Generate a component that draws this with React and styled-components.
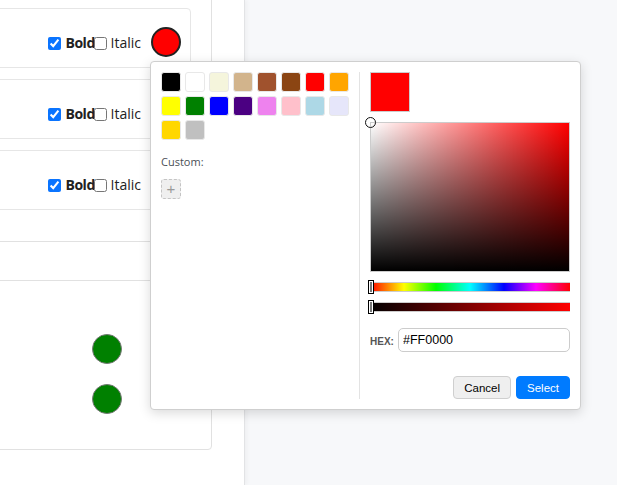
import React from "react";
import styled, { createGlobalStyle } from "styled-components";

const Global = createGlobalStyle`
  html, body { margin: 0; padding: 0; }
  body { font-family: "Open Sans", "Liberation Sans", sans-serif; background: #f7f8fa; }
  * { box-sizing: border-box; }
`;

const Page = styled.div`
  position: relative;
  display: flex;
  width: 617px;
  height: 485px;
  overflow: hidden;
  background: #f7f8fa;
`;

const LeftPanel = styled.div`
  width: 245px;
  flex: none;
  background: #fff;
  border-right: 1px solid #e2e3e5;
  box-shadow: 2px 0 4px rgba(0, 0, 0, 0.04);
  overflow: hidden;
`;

const Column = styled.div`
  display: flex;
  flex-direction: column;
  margin-left: -40px;
  padding-right: 32px;
`;

const Card = styled.div`
  background: #fff;
  border: 1px solid #e1e1e1;
  border-radius: 4px;
`;

const SettingsCard = styled(Card)`
  margin-top: -20px;
  padding: 27px 20px 31px 0;
  display: flex;
  flex-direction: column;
  gap: 11px;
`;

const SwatchCard = styled(Card)`
  margin-top: 38px;
  height: 170px;
  padding: 53px 89px 0 0;
  display: flex;
  flex-direction: column;
  align-items: flex-end;
  gap: 20px;
`;

const Row = styled.div`
  height: 60px;
  border: 1px solid #e6e6e6;
  border-radius: 4px;
  display: flex;
  align-items: center;
  justify-content: flex-end;
  padding: 8px 9px 0 0;
`;

const Toggle = styled.label`
  display: flex;
  align-items: center;
  font-size: 14px;
  line-height: 19px;
  color: #222;
  font-weight: ${(p) => (p.$bold ? 700 : 400)};
  white-space: nowrap;
`;

const Box = styled.input.attrs({ type: "checkbox", readOnly: true })`
  width: 13px;
  height: 13px;
  margin: 2px 0 0 0;
  accent-color: #0a74ff;
`;

const ToggleText = styled.span`
  display: inline-block;
  margin-left: ${(p) => p.$gap}px;
  width: ${(p) => (p.$w ? `${p.$w}px` : "auto")};
  letter-spacing: ${(p) => (p.$tight ? "-0.5px" : "0")};
  overflow: visible;
`;

const Dot = styled.div`
  width: 30px;
  height: 30px;
  border-radius: 50%;
  background: ${(p) => p.$color};
  border: ${(p) => p.$border};
  margin-left: ${(p) => p.$ml || 0}px;
  visibility: ${(p) => (p.$hidden ? "hidden" : "visible")};
  flex: none;
`;

const Popup = styled.div`
  position: absolute;
  left: 150px;
  top: 61px;
  width: 431px;
  height: 349px;
  background: #fff;
  border: 1px solid #cfcfcf;
  border-radius: 4px;
  box-shadow: 0 3px 12px rgba(0, 0, 0, 0.15);
  padding: 10px;
  display: flex;
`;

const Presets = styled.div`
  width: 199px;
  padding-right: 10px;
  border-right: 1px solid #e3e3e3;
  display: flex;
  flex-direction: column;
`;

const SwatchGrid = styled.div`
  display: grid;
  grid-template-columns: repeat(8, 20px);
  grid-auto-rows: 20px;
  gap: 4px;
`;

const Swatch = styled.div`
  width: 20px;
  height: 20px;
  border: 1px solid #e8e8e8;
  border-radius: 3px;
  background: ${(p) => p.$color};
`;

const CustomLabel = styled.div`
  margin-top: 14px;
  font-size: 11px;
  line-height: 15px;
  color: #4a4f55;
`;

const AddButton = styled.div`
  margin-top: 10px;
  width: 20px;
  height: 20px;
  border: 1px dashed #c4c4c4;
  border-radius: 3px;
  background: #efefef;
  color: #999;
  font-family: "Liberation Sans", sans-serif;
  font-size: 15px;
  line-height: 17px;
  text-align: center;
`;

const Editor = styled.div`
  flex: 1;
  padding-left: 10px;
  display: flex;
  flex-direction: column;
`;

const Preview = styled.div`
  width: 40px;
  height: 40px;
  border: 1px solid #ccc;
  background: #ff0000;
`;

const SatBox = styled.div`
  position: relative;
  margin-top: 10px;
  width: 200px;
  height: 150px;
  border: 1px solid #ccc;
  background:
    linear-gradient(to top, #000, rgba(0, 0, 0, 0)),
    linear-gradient(to right, #fff, rgba(255, 255, 255, 0)),
    #ff0000;
`;

const SatMarker = styled.div`
  position: absolute;
  left: -6px;
  top: -6px;
  width: 11px;
  height: 11px;
  border-radius: 50%;
  border: 1.5px solid #111;
`;

const Slider = styled.div`
  position: relative;
  margin-top: 10px;
  width: 200px;
  height: 10px;
  border-top: 1px solid #ccc;
  border-bottom: 1px solid #ccc;
  background: ${(p) => p.$bg};
`;

const Handle = styled.div`
  position: absolute;
  left: -2px;
  top: -3px;
  width: 6px;
  height: 14px;
  background: #777;
  border: 1px solid #000;
  box-shadow: inset 0 0 0 1px #fff;
`;

const HexRow = styled.div`
  margin-top: 16px;
  display: flex;
  align-items: center;
  gap: 6px;
`;

const HexLabel = styled.span`
  width: 22px;
  font-family: "Liberation Sans", sans-serif;
  font-size: 10px;
  font-weight: 700;
  color: #555;
  padding-top: 3px;
`;

const HexInput = styled.input.attrs({ readOnly: true })`
  flex: 1;
  height: 24px;
  min-width: 0;
  border: 1px solid #ccc;
  border-radius: 5px;
  padding: 0 4px;
  font-family: "Liberation Sans", sans-serif;
  font-size: 12.5px;
  color: #000;
  outline: none;
`;

const Actions = styled.div`
  margin-top: auto;
  display: flex;
  justify-content: flex-end;
  gap: 5px;
`;

const Button = styled.button`
  height: 23px;
  padding: 0 10px;
  border-radius: 4px;
  font-family: "Liberation Sans", sans-serif;
  font-size: 11.5px;
  cursor: pointer;
  border: 1px solid ${(p) => (p.$primary ? "#007bff" : "#cfcfcf")};
  background: ${(p) => (p.$primary ? "#007bff" : "#efefef")};
  color: ${(p) => (p.$primary ? "#fff" : "#000")};
`;

const presets = [
  "#000000", "#ffffff", "#f5f5dc", "#d2b48c", "#a0522d", "#8b4513", "#ff0000", "#ffa500",
  "#ffff00", "#008000", "#0000ff", "#4b0082", "#ee82ee", "#ffc0cb", "#add8e6", "#e6e6fa",
  "#ffd700", "#c0c0c0",
];

function StyleRow({ circle }) {
  return (
    <Row>
      <Toggle $bold>
        <Box defaultChecked />
        <ToggleText $gap={5} $w={28} $tight>Bold</ToggleText>
      </Toggle>
      <Toggle>
        <Box />
        <ToggleText $gap={4}>Italic</ToggleText>
      </Toggle>
      <Dot $color="#ff0000" $border="2px solid #222" $ml={10} $hidden={!circle} />
    </Row>
  );
}

export default function App() {
  return (
    <Page>
      <Global />
      <LeftPanel>
        <Column>
          <SettingsCard>
            <StyleRow circle />
            <StyleRow />
            <StyleRow />
          </SettingsCard>
          <SwatchCard>
            <Dot $color="#008000" $border="1px solid #777" />
            <Dot $color="#008000" $border="1px solid #777" />
          </SwatchCard>
        </Column>
      </LeftPanel>
      <Popup>
        <Presets>
          <SwatchGrid>
            {presets.map((c) => (
              <Swatch key={c} $color={c} />
            ))}
          </SwatchGrid>
          <CustomLabel>Custom:</CustomLabel>
          <AddButton>+</AddButton>
        </Presets>
        <Editor>
          <Preview />
          <SatBox>
            <SatMarker />
          </SatBox>
          <Slider $bg="linear-gradient(to right, #f00 0%, #ff0 17%, #0f0 33%, #0ff 50%, #00f 67%, #f0f 83%, #f00 100%)">
            <Handle />
          </Slider>
          <Slider $bg="linear-gradient(to right, #000, #f00)">
            <Handle />
          </Slider>
          <HexRow>
            <HexLabel>HEX:</HexLabel>
            <HexInput value="#FF0000" />
          </HexRow>
          <Actions>
            <Button>Cancel</Button>
            <Button $primary>Select</Button>
          </Actions>
        </Editor>
      </Popup>
    </Page>
  );
}
